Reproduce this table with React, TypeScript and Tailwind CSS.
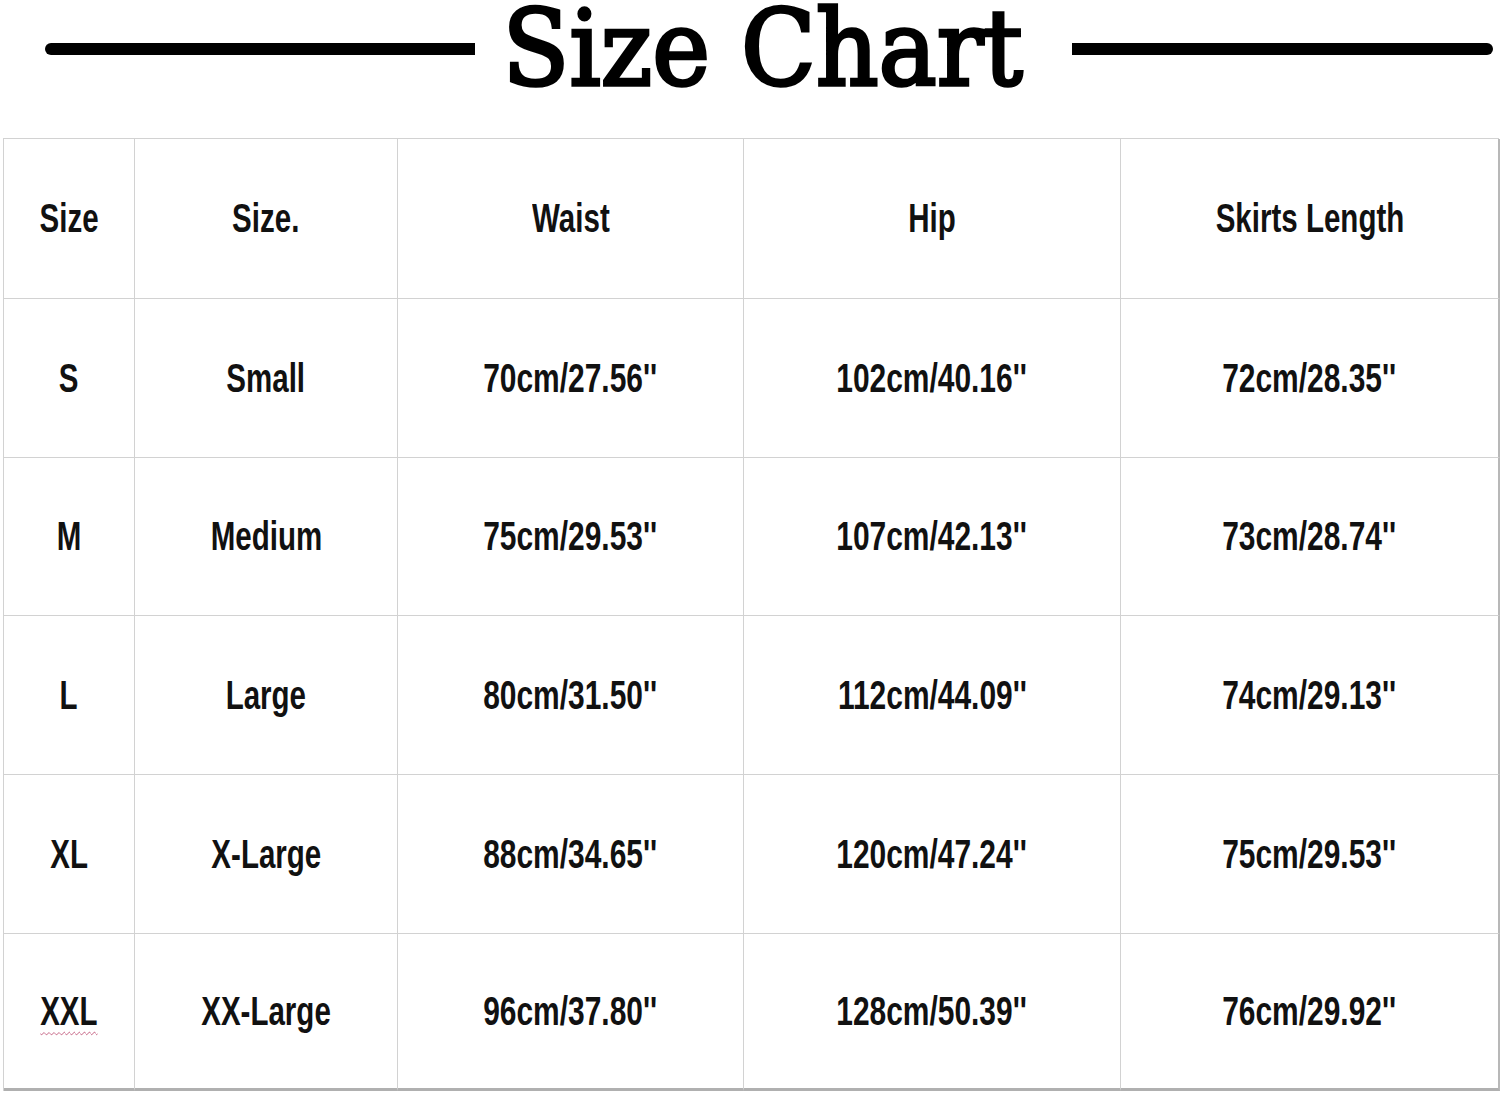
import React from "react";

const headers = ["Size", "Size.", "Waist", "Hip", "Skirts Length"];
const rows = [
  ["S", "Small", "70cm/27.56''", "102cm/40.16''", "72cm/28.35''"],
  ["M", "Medium", "75cm/29.53''", "107cm/42.13''", "73cm/28.74''"],
  ["L", "Large", "80cm/31.50''", "112cm/44.09''", "74cm/29.13''"],
  ["XL", "X-Large", "88cm/34.65''", "120cm/47.24''", "75cm/29.53''"],
  ["XXL", "XX-Large", "96cm/37.80''", "128cm/50.39''", "76cm/29.92''"],
];

function Cell({
  children,
  numeric,
  last,
  lastRow,
  wavy,
}: {
  children: React.ReactNode;
  numeric?: boolean;
  last?: boolean;
  lastRow?: boolean;
  wavy?: boolean;
}) {
  return (
    <div
      className={
        "flex items-center justify-center border-[#d2d2d2] " +
        (last ? "border-r-2 border-r-[#b8b8b8] " : "border-r-[1.5px] ") +
        (lastRow ? "border-b-[3px] border-b-[#b0b0b0] " : "border-b-[1.5px] ")
      }
    >
      <span
        className={
          "inline-block whitespace-nowrap text-[41px] leading-none font-bold text-[#111] font-['Liberation_Sans',Arial,sans-serif] " +
          (numeric ? "scale-x-[0.73] " : "scale-x-[0.72] ") +
          (wavy
            ? "underline decoration-wavy decoration-[#c0587a] decoration-1 underline-offset-[6px]"
            : "")
        }
      >
        {children}
      </span>
    </div>
  );
}

export default function App() {
  return (
    <div className="w-[1500px] h-[1094px] bg-white overflow-hidden">
      <div className="flex h-[138px] items-start">
        <div className="ml-[45px] mt-[43px] h-[12px] w-[430px] rounded-l-full bg-black" />
        <div className="ml-[24px] mt-[-3px] w-[527px] flex justify-center">
          <span className="inline-block whitespace-nowrap text-[105px] leading-none font-normal text-black scale-x-[0.93] [-webkit-text-stroke:3.5px_black] font-['DejaVu_Serif','Liberation_Serif',serif]">
            Size Chart
          </span>
        </div>
        <div className="ml-[46px] mt-[43px] h-[12px] w-[421px] rounded-r-full bg-black" />
      </div>
      <div className="ml-[3px] w-[1496px] grid grid-cols-[131px_263px_346px_377px_379px] grid-rows-[160px_159px_158px_159px_159px_157px] border-l-[1.5px] border-t-[1.5px] border-[#d2d2d2]">
        {headers.map((h, i) => (
          <Cell key={h + i} last={i === 4}>
            {h}
          </Cell>
        ))}
        {rows.map((r, ri) =>
          r.map((c, ci) => (
            <Cell
              key={ri + "-" + ci}
              numeric={ci >= 2}
              last={ci === 4}
              lastRow={ri === rows.length - 1}
              wavy={ri === 4 && ci === 0}
            >
              {c}
            </Cell>
          ))
        )}
      </div>
    </div>
  );
}
